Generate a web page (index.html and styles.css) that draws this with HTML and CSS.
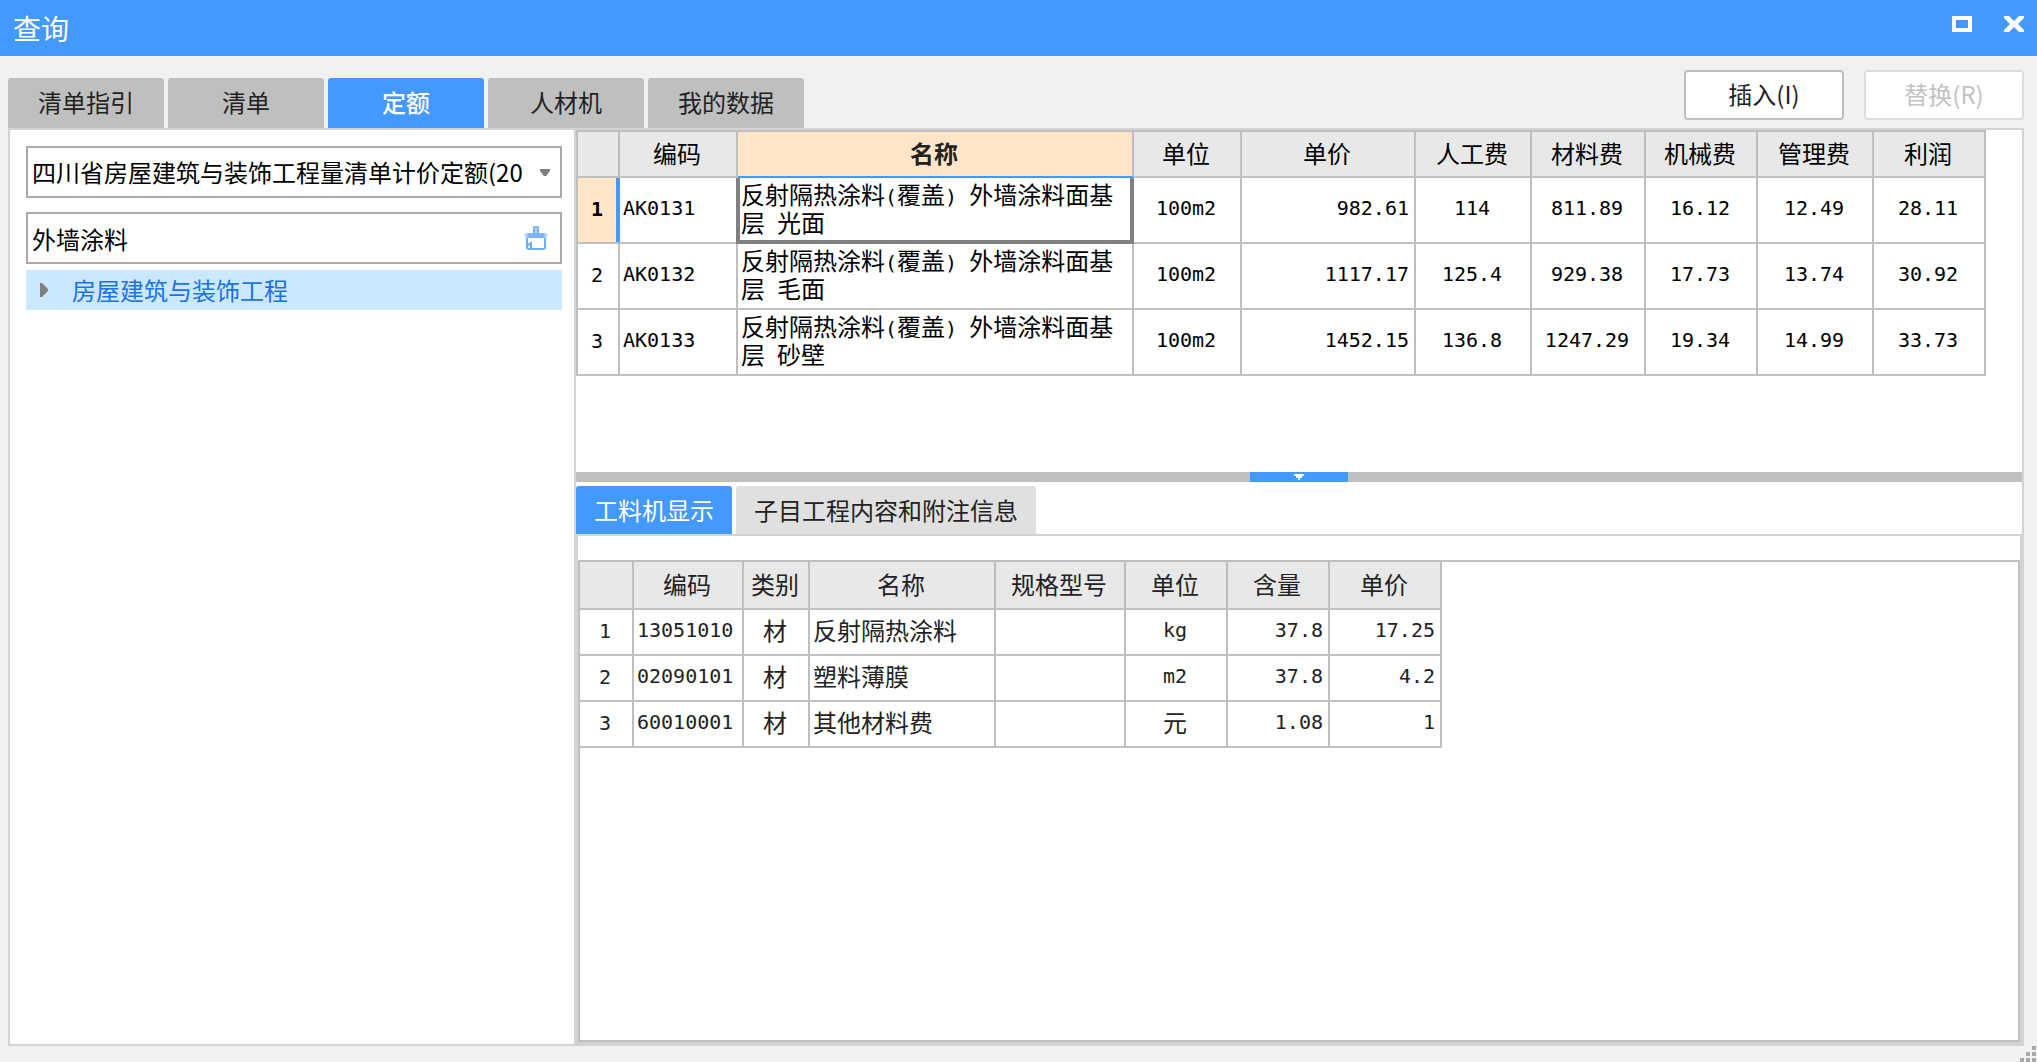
FILE: index.html
```html
<!DOCTYPE html>
<html lang="zh-CN">
<head>
<meta charset="utf-8">
<title>查询</title>
<link rel="stylesheet" href="styles.css">
</head>
<body>
<header class="titlebar">
  <h1 class="title">查询</h1>
  <div class="window-buttons">
    <button type="button" class="window-button" aria-label="最大化">
      <svg width="20" height="16" viewBox="0 0 20 16"><path d="M2 2H18V14H2Z" fill="none" stroke="#fff" stroke-width="4"/></svg>
    </button>
    <button type="button" class="window-button" aria-label="关闭">
      <svg width="20" height="16" viewBox="0 0 20 16"><path d="M0 0H5L10 5L15 0H20V2L14 8L20 14V16H15L10 11L5 16H0V14L6 8L0 2Z" fill="#fff"/></svg>
    </button>
  </div>
</header>

<div class="toolbar">
  <nav class="tabs">
    <button type="button" class="tab">清单指引</button>
    <button type="button" class="tab">清单</button>
    <button type="button" class="tab tab-active">定额</button>
    <button type="button" class="tab">人材机</button>
    <button type="button" class="tab">我的数据</button>
  </nav>
  <div class="actions">
    <button type="button" class="action">插入(I)</button>
    <button type="button" class="action" disabled>替换(R)</button>
  </div>
</div>

<main class="workspace">
  <aside class="sidebar">
    <div class="field">
      <select class="field-control" aria-label="定额库">
        <option>四川省房屋建筑与装饰工程量清单计价定额(20</option>
      </select>
      <svg class="field-arrow" width="10" height="7" viewBox="0 0 10 7"><path d="M0 0H10V2L6 7H4L0 2Z" fill="#7f7f7f"/></svg>
    </div>
    <div class="field">
      <input class="field-control" type="text" value="外墙涂料" aria-label="搜索">
      <button type="button" class="clear" aria-label="清除">
        <svg width="24" height="24" viewBox="0 0 24 24">
          <path d="M10 8V2a2 2 0 0 1 4 0V8Z" fill="#a9d0ff" stroke="#7db6ff" stroke-width="2"/>
          <path d="M4 7H20a2 2 0 0 1 2 2V12H2V9a2 2 0 0 1 2-2Z" fill="#7db6ff"/>
          <path d="M0 8H4V12H2ZM24 8H20V12H22Z" fill="#a9d0ff"/>
          <path d="M3 12V21a2 2 0 0 0 2 2H19a2 2 0 0 0 2-2V12" fill="none" stroke="#6aabff" stroke-width="2"/>
          <path d="M3 20L7 17V22" fill="none" stroke="#6aabff" stroke-width="2"/>
        </svg>
      </button>
    </div>
    <button type="button" class="tree-item">
      <svg width="8" height="14" viewBox="0 0 8 14"><path d="M0 0H2L8 6V8L2 14H0Z" fill="#7f7f7f"/></svg>
      房屋建筑与装饰工程
    </button>
  </aside>

  <section class="content">
    <div class="quota-area">
      <table class="grid quota">
        <colgroup>
          <col class="w42"><col class="w118"><col class="w396"><col class="w108"><col class="w174"><col class="w116"><col class="w114"><col class="w112"><col class="w116"><col class="w112">
        </colgroup>
        <thead>
          <tr><th></th><th>编码</th><th class="head-current">名称</th><th>单位</th><th>单价</th><th>人工费</th><th>材料费</th><th>机械费</th><th>管理费</th><th>利润</th></tr>
        </thead>
        <tbody>
          <tr><th class="row-current">1</th><td class="left num">AK0131</td><td class="name name-current">反射隔热涂料<span class="num">(</span>覆盖<span class="num">) </span>外墙涂料面基层<span class="num"> </span>光面</td><td class="num">100m2</td><td class="right num">982.61</td><td class="num">114</td><td class="num">811.89</td><td class="num">16.12</td><td class="num">12.49</td><td class="num">28.11</td></tr>
          <tr><th>2</th><td class="left num">AK0132</td><td class="name">反射隔热涂料<span class="num">(</span>覆盖<span class="num">) </span>外墙涂料面基层<span class="num"> </span>毛面</td><td class="num">100m2</td><td class="right num">1117.17</td><td class="num">125.4</td><td class="num">929.38</td><td class="num">17.73</td><td class="num">13.74</td><td class="num">30.92</td></tr>
          <tr><th>3</th><td class="left num">AK0133</td><td class="name">反射隔热涂料<span class="num">(</span>覆盖<span class="num">) </span>外墙涂料面基层<span class="num"> </span>砂壁</td><td class="num">100m2</td><td class="right num">1452.15</td><td class="num">136.8</td><td class="num">1247.29</td><td class="num">19.34</td><td class="num">14.99</td><td class="num">33.73</td></tr>
        </tbody>
      </table>
    </div>

    <div class="splitter">
      <button type="button" class="splitter-handle" aria-label="折叠">
        <svg width="10" height="6" viewBox="0 0 10 6"><path d="M0 0H10V2H8V4H6V6H4V4H2V2H0Z" fill="#fff"/></svg>
      </button>
    </div>

    <nav class="subtabs">
      <button type="button" class="subtab subtab-active">工料机显示</button>
      <button type="button" class="subtab">子目工程内容和附注信息</button>
    </nav>
    <div class="subpage">
      <div class="resource-area">
        <table class="grid resource">
          <colgroup>
            <col class="w54"><col class="w110"><col class="w66"><col class="w186"><col class="w130"><col class="w102"><col class="w102"><col class="w112">
          </colgroup>
          <thead>
            <tr><th></th><th>编码</th><th>类别</th><th>名称</th><th>规格型号</th><th>单位</th><th>含量</th><th>单价</th></tr>
          </thead>
          <tbody>
            <tr><th>1</th><td class="left num">13051010</td><td>材</td><td class="left">反射隔热涂料</td><td></td><td class="num">kg</td><td class="right num">37.8</td><td class="right num">17.25</td></tr>
            <tr><th>2</th><td class="left num">02090101</td><td>材</td><td class="left">塑料薄膜</td><td></td><td class="num">m2</td><td class="right num">37.8</td><td class="right num">4.2</td></tr>
            <tr><th>3</th><td class="left num">60010001</td><td>材</td><td class="left">其他材料费</td><td></td><td>元</td><td class="right num">1.08</td><td class="right num">1</td></tr>
          </tbody>
        </table>
      </div>
    </div>
  </section>
</main>

<svg class="resize-grip" width="16" height="16" viewBox="0 0 16 16"><path d="M12 0h4v4h-4zM6 6h4v4H6zM12 6h4v4h-4zM0 12h4v4H0zM6 12h4v4H6zM12 12h4v4h-4z" fill="#aaa"/></svg>
</body>
</html>
```
FILE: styles.css
```css
* {
  box-sizing: border-box;
}

body {
  margin: 0;
  height: 100vh;
  display: flex;
  flex-direction: column;
  background: #f1f1f1;
  color: #222;
  font: 24px/28px "Noto Sans CJK SC", sans-serif;
}

button,
input,
select {
  margin: 0;
  padding: 0;
  border: 0;
  background: none;
  color: inherit;
  font: inherit;
}

svg {
  display: block;
}

/* Title bar */
.titlebar {
  display: flex;
  justify-content: space-between;
  height: 56px;
  padding: 0 13px;
  background: #4499ff;
  color: #fff;
}

.title {
  margin: 0;
  font-size: 28px;
  font-weight: 400;
  line-height: 56px;
}

.window-buttons {
  display: flex;
  align-items: flex-start;
  gap: 32px;
  padding-top: 16px;
}

/* Tabs and actions */
.toolbar {
  display: flex;
  justify-content: space-between;
  align-items: flex-end;
  height: 72px;
  padding: 0 13px 0 8px;
}

.tabs {
  display: flex;
  gap: 4px;
}

.tab {
  width: 156px;
  height: 50px;
  padding-bottom: 2px;
  border-radius: 3px 3px 0 0;
  background: #bfbfbf;
}

.tab-active {
  background: #4499ff;
  color: #fff;
  font-weight: 500;
}

.actions {
  display: flex;
  gap: 20px;
  padding-bottom: 8px;
}

.action {
  width: 160px;
  height: 50px;
  padding-bottom: 2px;
  border: 2px solid #bfbfbf;
  border-radius: 4px;
  background: #fff;
}

.action:disabled {
  border-color: #dcdcdc;
  color: #c3c3c3;
}

/* Workspace */
.workspace {
  flex: 1;
  min-height: 0;
  display: flex;
  margin: 0 13px 16px 8px;
  border: 2px solid #d3d3d3;
  background: #fff;
}

.sidebar {
  flex: none;
  width: 566px;
  padding: 16px 12px 0 16px;
  border-right: 2px solid #d3d3d3;
}

.field {
  display: flex;
  align-items: center;
  height: 52px;
  margin-bottom: 14px;
  padding: 0 10px 0 4px;
  border: 2px solid #aaa;
  color: #000;
}

.field + .field {
  margin-bottom: 6px;
  padding-right: 12px;
}

.field-control {
  flex: 1;
  min-width: 0;
  height: 48px;
  outline: 0;
  appearance: none;
}

.field-arrow {
  pointer-events: none;
}

.tree-item {
  display: flex;
  align-items: center;
  gap: 24px;
  width: 100%;
  height: 40px;
  padding-left: 14px;
  background: #cce8ff;
  color: #1a73e8;
}

.content {
  flex: 1;
  min-width: 0;
  display: flex;
  flex-direction: column;
}

.quota-area {
  flex: none;
  height: 342px;
  overflow: hidden;
}

.splitter {
  flex: none;
  display: flex;
  justify-content: center;
  height: 10px;
  background: #bfbfbf;
}

.splitter-handle {
  display: flex;
  justify-content: center;
  align-items: center;
  width: 98px;
  height: 10px;
  background: #4499ff;
}

.subtabs {
  display: flex;
  gap: 4px;
  padding-top: 4px;
}

.subtab {
  height: 48px;
  padding: 0 18px;
  border-radius: 3px 3px 0 0;
  background: #e0e0e0;
}

.subtab-active {
  background: #4499ff;
  color: #fff;
}

.subpage {
  flex: 1;
  min-height: 0;
  display: flex;
  flex-direction: column;
  padding-top: 24px;
  border: 2px solid #d3d3d3;
}

.resource-area {
  flex: 1;
  min-height: 0;
  border: 2px solid #bfbfbf;
}

/* Data grids */
.grid {
  table-layout: fixed;
  border-collapse: separate;
  border-spacing: 0;
}

.grid th,
.grid td {
  padding: 0 2px 2px 0;
  border: solid #bfbfbf;
  border-width: 0 2px 2px 0;
  text-align: center;
  vertical-align: middle;
}

.grid th {
  font-weight: 400;
}

.grid thead th {
  background: #e8e8e8;
}

.grid tbody th,
.num {
  font-family: "DejaVu Sans Mono", "Noto Sans CJK SC", monospace;
  font-size: 20px;
}

.grid td {
  padding-bottom: 4px;
}

.grid .left {
  padding-left: 3px;
  text-align: left;
}

.grid .right {
  padding-right: 5px;
  text-align: right;
}

.quota {
  width: 1410px;
  border: solid #bfbfbf;
  border-width: 2px 0 0 2px;
  color: #000;
}

.quota thead th {
  height: 46px;
}

.quota tbody th,
.quota td {
  height: 66px;
}

.quota .name {
  padding: 0 3px 4px;
  text-align: left;
}

.name .num {
  line-height: 20px;
}

.grid thead .head-current {
  border-bottom-color: #4499ff;
  background: #ffe6c8;
  color: #222;
  font-weight: 700;
}

.grid .row-current {
  position: relative;
  background: #ffe6c8;
  font-weight: 700;
}

.row-current::after {
  content: "";
  position: absolute;
  top: 0;
  right: -2px;
  bottom: 0;
  width: 4px;
  background: #4499ff;
}

.name-current {
  position: relative;
}

.name-current::after {
  content: "";
  position: absolute;
  inset: 0 -2px -2px -2px;
  border: solid #808080;
  border-width: 0 4px 4px;
}

.resource {
  width: 862px;
}

.resource thead th {
  height: 48px;
}

.resource tbody th,
.resource td {
  height: 46px;
}

.w42 { width: 42px; }
.w54 { width: 54px; }
.w66 { width: 66px; }
.w102 { width: 102px; }
.w108 { width: 108px; }
.w110 { width: 110px; }
.w112 { width: 112px; }
.w114 { width: 114px; }
.w116 { width: 116px; }
.w118 { width: 118px; }
.w130 { width: 130px; }
.w174 { width: 174px; }
.w186 { width: 186px; }
.w396 { width: 396px; }

.resize-grip {
  position: fixed;
  right: 1px;
  bottom: 0;
}
```
